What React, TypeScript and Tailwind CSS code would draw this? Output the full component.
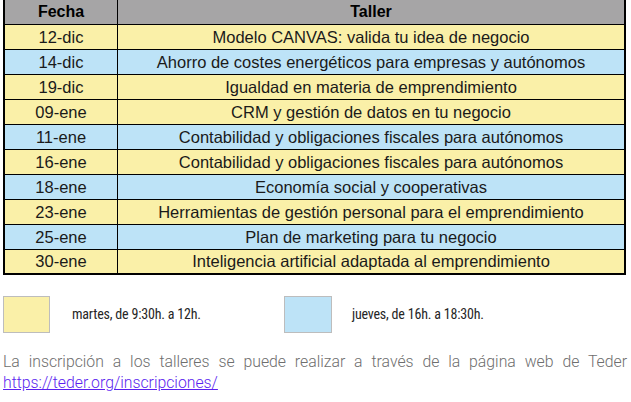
const rows: { fecha: string; taller: string; turno: 'm' | 'j' }[] = [
  { fecha: '12-dic', taller: 'Modelo CANVAS: valida tu idea de negocio', turno: 'm' },
  { fecha: '14-dic', taller: 'Ahorro de costes energéticos para empresas y autónomos', turno: 'j' },
  { fecha: '19-dic', taller: 'Igualdad en materia de emprendimiento', turno: 'm' },
  { fecha: '09-ene', taller: 'CRM y gestión de datos en tu negocio', turno: 'm' },
  { fecha: '11-ene', taller: 'Contabilidad y obligaciones fiscales para autónomos', turno: 'j' },
  { fecha: '16-ene', taller: 'Contabilidad y obligaciones fiscales para autónomos', turno: 'm' },
  { fecha: '18-ene', taller: 'Economía social y cooperativas', turno: 'j' },
  { fecha: '23-ene', taller: 'Herramientas de gestión personal para el emprendimiento', turno: 'm' },
  { fecha: '25-ene', taller: 'Plan de marketing para tu negocio', turno: 'j' },
  { fecha: '30-ene', taller: 'Inteligencia artificial adaptada al emprendimiento', turno: 'm' },
];

function rowBg(t: 'm' | 'j') {
  return t === 'm' ? 'bg-[#faf0a8]' : 'bg-[#bde3f7]';
}

export default function App() {
  return (
    <div className="w-[631px] h-[402px] bg-white overflow-hidden">
      {/* Tabla de talleres */}
      <div className="ml-[3px] w-[623px] border-x-2 border-b-2 border-black font-['Liberation_Sans',sans-serif] text-[16.5px] text-[#1a1a1a]">
        <div className="flex h-[25px] bg-[#a6a5a6] border-b border-black font-bold text-[16px] text-black">
          <div className="w-[113px] border-r border-black flex items-center justify-center">Fecha</div>
          <div className="flex-1 flex items-center justify-center">Taller</div>
        </div>
        {rows.map((r, i) => (
          <div
            key={i}
            className={`flex ${i === rows.length - 1 ? 'h-[23px]' : 'h-[25px] border-b border-black'} ${rowBg(r.turno)}`}
          >
            <div className="w-[113px] border-r border-black flex items-center justify-center">{r.fecha}</div>
            <div className="flex-1 flex items-center justify-center">{r.taller}</div>
          </div>
        ))}
      </div>

      {/* Leyenda */}
      <div className="flex items-center mt-[21px] ml-[3px] font-['Roboto',sans-serif] text-[14px] tracking-[-0.2px] font-stretch-condensed text-[#262626]">
        <div className="w-[47px] h-[37px] bg-[#faf0a8] border border-[#bdbdbd]" />
        <span className="ml-[22px] w-[212px]">martes, de 9:30h. a 12h.</span>
        <div className="w-[48px] h-[37px] bg-[#bde3f7] border border-[#bdbdbd]" />
        <span className="ml-[20px]">jueves, de 16h. a 18:30h.</span>
      </div>

      {/* Inscripción */}
      <p className="mt-[18px] ml-[3px] w-[624px] text-justify leading-[21px] font-['Roboto',sans-serif] font-light text-[15.8px] text-[#6e6e6e]">
        La inscripción a los talleres se puede realizar a través de la página web de Teder{' '}
        <a href="#" className="text-[#5b1ff0] underline">https://teder.org/inscripciones/</a>
      </p>
    </div>
  );
}
